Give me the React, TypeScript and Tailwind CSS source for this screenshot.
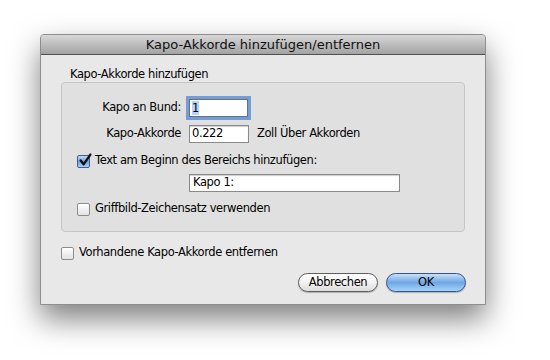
import React from "react";

const font = { fontFamily: '"DejaVu Sans", "Liberation Sans", sans-serif' };

function Checkbox({ checked }: { checked?: boolean }) {
  if (checked) {
    return (
      <span className="relative inline-block h-[13px] w-[13px] shrink-0 rounded-[2px] border border-[#3d5f93] bg-gradient-to-b from-[#c4dcf5] via-[#6fa2dc] to-[#a9cff2]">
        <svg viewBox="0 0 13 13" className="absolute -top-[3px] left-[0px] h-[14px] w-[14px]">
          <path d="M2.5 7 L5.2 10.5 L11.5 1.5" fill="none" stroke="#111" strokeWidth="2.2" strokeLinecap="round" strokeLinejoin="round" />
        </svg>
      </span>
    );
  }
  return (
    <span className="inline-block h-[13px] w-[13px] shrink-0 rounded-[2px] border border-[#8d8d8d] bg-gradient-to-b from-[#ffffff] to-[#e2e2e2] shadow-[inset_0_1px_0_#fff]" />
  );
}

export default function App() {
  return (
    <div className="min-h-[360px] w-[550px] bg-white pl-[40px] pt-[34px]" style={font}>
      <div className="w-[446px] overflow-hidden rounded-t-[4px] border border-[#8e8e8e] bg-[#e8e8e8] shadow-[0_14px_30px_rgba(0,0,0,0.5)]">
        {/* title bar */}
        <div className="flex h-[20px] items-center justify-center border-b border-[#505050] bg-gradient-to-b from-[#d8d8d8] to-[#a3a3a3] text-[13px] text-[#111]">
          Kapo-Akkorde hinzufügen/entfernen
        </div>

        <div className="pb-[12px] pl-[20px] pr-[19px] pt-[11px] text-[11.5px] tracking-[-0.4px] text-black">
          <div className="pl-[9px] leading-[16px]">Kapo-Akkorde hinzufügen</div>

          <div className="mr-[1px] h-[150px] rounded-[4px] border border-[#c6c6c6] bg-[#e0e0e0] pl-[15px] pt-[14px]">
            <div className="flex h-[22px] items-center">
              <span className="w-[112px] pr-[8px] text-right">Kapo an Bund:</span>
              <div className="flex h-[18px] w-[59px] items-center border border-[#6f6f6f] bg-white pl-[2px] shadow-[0_0_0_3px_rgba(95,145,215,0.85)]">
                <span className="bg-[#b5d5ff] leading-[14px]">1</span>
              </div>
            </div>
            <div className="mt-[6px] flex h-[18px] items-center">
              <span className="w-[112px] pr-[8px] text-right">Kapo-Akkorde</span>
              <div className="flex h-[18px] w-[60px] items-center border border-[#8a8a8a] bg-white pl-[2px] shadow-[inset_0_1px_1px_rgba(0,0,0,0.2)]">
                0.222
              </div>
              <span className="ml-[8px]">Zoll Über Akkorden</span>
            </div>
            <div className="mt-[10px] flex h-[16px] items-center gap-[5px]">
              <Checkbox checked />
              <span>Text am Beginn des Bereichs hinzufügen:</span>
            </div>
            <div className="mt-[5px] pl-[112px]">
              <div className="flex h-[18px] w-[211px] items-center border border-[#8a8a8a] bg-white pl-[3px] shadow-[inset_0_1px_1px_rgba(0,0,0,0.2)]">
                Kapo 1:
              </div>
            </div>
            <div className="mt-[9px] flex h-[16px] items-center gap-[5px]">
              <Checkbox />
              <span>Griffbild-Zeichensatz verwenden</span>
            </div>
          </div>

          <div className="mt-[13px] flex h-[16px] items-center gap-[5px]">
            <Checkbox />
            <span>Vorhandene Kapo-Akkorde entfernen</span>
          </div>

          <div className="mt-[12px] flex justify-end gap-[8px]">
            <button className="flex h-[19px] w-[80px] items-center justify-center rounded-full border border-[#5e5e5e] bg-gradient-to-b from-[#ffffff] via-[#f2f2f2] to-[#dcdcdc] text-black shadow-[0_1px_1px_rgba(0,0,0,0.25)]">
              Abbrechen
            </button>
            <button className="flex h-[19px] w-[80px] items-center justify-center rounded-full border border-[#35558f] bg-gradient-to-b from-[#c9e0f8] via-[#6ea7e4] to-[#a6d2fa] text-black shadow-[0_1px_1px_rgba(0,0,0,0.25)]">
              OK
            </button>
          </div>
        </div>
      </div>
    </div>
  );
}
